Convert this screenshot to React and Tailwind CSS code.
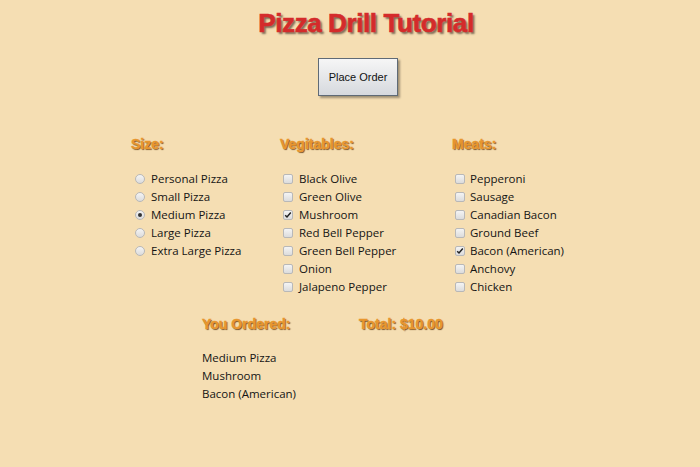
import React from "react";

const body = { fontFamily: '"Open Sans", "Noto Sans", sans-serif' };
const head = { fontFamily: '"Liberation Sans", Arial, sans-serif' };

function Radio({ checked }) {
  return (
    <span className="inline-flex w-[10px] h-[10px] rounded-full border border-[#b8b8b8] bg-gradient-to-b from-[#f4f4f4] to-[#dcdcdc] items-center justify-center shrink-0">
      {checked && <span className="w-[4px] h-[4px] rounded-full bg-[#333]" />}
    </span>
  );
}

function Check({ checked }) {
  return (
    <span className="inline-flex w-[10px] h-[10px] rounded-[2px] border border-[#b8b8b8] bg-gradient-to-b from-[#f4f4f4] to-[#dcdcdc] items-center justify-center shrink-0">
      {checked && (
        <svg width="8" height="8" viewBox="0 0 8 8">
          <path d="M1.2 4.2 L3 6 L6.8 1.6" fill="none" stroke="#222" strokeWidth="1.5" />
        </svg>
      )}
    </span>
  );
}

function Heading({ children }) {
  return (
    <div
      className="text-[14px] font-bold text-[#e8962e] leading-[18px]"
      style={{ ...head, textShadow: "1px 1px 1px #6e4f28", WebkitTextStroke: "0.4px #e8962e" }}
    >
      {children}
    </div>
  );
}

function Item({ kind, checked, label, gap }) {
  return (
    <div className={`flex items-center h-[18px] ${gap}`}>
      {kind === "radio" ? <Radio checked={checked} /> : <Check checked={checked} />}
      <span className="text-[11.5px] text-[#141414] leading-[18px]">{label}</span>
    </div>
  );
}

export default function App() {
  const sizes = ["Personal Pizza", "Small Pizza", "Medium Pizza", "Large Pizza", "Extra Large Pizza"];
  const vegs = ["Black Olive", "Green Olive", "Mushroom", "Red Bell Pepper", "Green Bell Pepper", "Onion", "Jalapeno Pepper"];
  const meats = ["Pepperoni", "Sausage", "Canadian Bacon", "Ground Beef", "Bacon (American)", "Anchovy", "Chicken"];
  return (
    <div className="w-[700px] h-[467px] bg-[#f5deb3] overflow-hidden" style={body}>
      <div className="flex justify-center pt-[7px] pl-[32px]">
        <h1
          className="text-[26px] font-bold text-[#d42b2b] leading-[32px] tracking-[-0.4px]"
          style={{ ...head, textShadow: "2px 2px 2px #7d6a55", WebkitTextStroke: "0.6px #d42b2b" }}
        >
          Pizza Drill Tutorial
        </h1>
      </div>
      <div className="flex justify-center mt-[19px] pl-[16px]">
        <button
          className="w-[80px] h-[38px] border border-[#5f6a76] bg-gradient-to-b from-[#f6f6f6] to-[#d6d9de] text-[11px] text-[#111] shadow-[2px_2px_2px_rgba(0,0,0,0.35)]"
          style={{ fontFamily: '"Liberation Sans", Arial, sans-serif' }}
        >
          Place Order
        </button>
      </div>
      <div className="flex pl-[131px] mt-[39px]">
        <div className="w-[149px]">
          <Heading>Size:</Heading>
          <div className="mt-[17px] pl-[4px]">
            {sizes.map((s) => (
              <Item key={s} kind="radio" checked={s === "Medium Pizza"} label={s} gap="gap-[6px]" />
            ))}
          </div>
        </div>
        <div className="w-[172px]">
          <Heading>Vegitables:</Heading>
          <div className="mt-[17px] pl-[3px]">
            {vegs.map((s) => (
              <Item key={s} kind="check" checked={s === "Mushroom"} label={s} gap="gap-[6px]" />
            ))}
          </div>
        </div>
        <div>
          <Heading>Meats:</Heading>
          <div className="mt-[17px] pl-[3px]">
            {meats.map((s) => (
              <Item key={s} kind="check" checked={s === "Bacon (American)"} label={s} gap="gap-[5px]" />
            ))}
          </div>
        </div>
      </div>
      <div className="flex pl-[202px] mt-[19px]">
        <div className="w-[157px]">
          <Heading>You Ordered:</Heading>
          <div className="mt-[16px]">
            {["Medium Pizza", "Mushroom", "Bacon (American)"].map((s) => (
              <div key={s} className="text-[11.5px] text-[#141414] leading-[18px]">{s}</div>
            ))}
          </div>
        </div>
        <Heading>Total: $10.00</Heading>
      </div>
    </div>
  );
}
